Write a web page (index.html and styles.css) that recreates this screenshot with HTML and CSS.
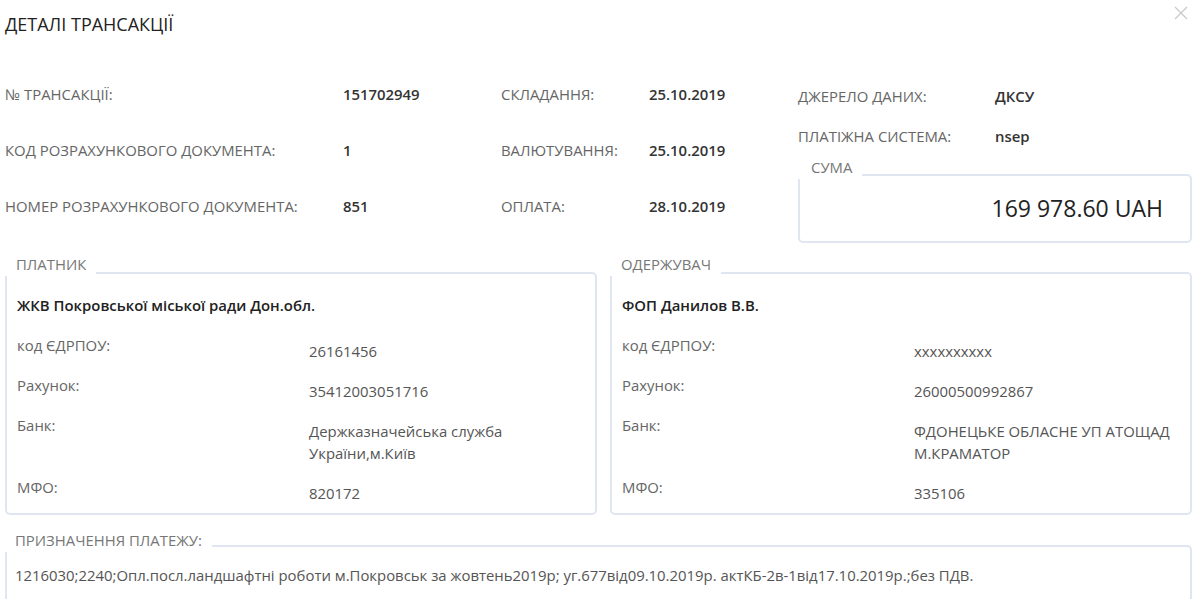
FILE: index.html
```html
<!DOCTYPE html>
<html lang="uk">
<head>
<meta charset="utf-8">
<title>Деталі трансакції</title>
<link rel="stylesheet" href="styles.css">
</head>
<body>
<div class="page">
  <header class="head">
    <h1 class="title">ДЕТАЛІ ТРАНСАКЦІЇ</h1>
    <button class="close" aria-label="Закрити">
      <svg width="14" height="14" viewBox="0 0 14 14"><path d="M1 1L13 13M13 1L1 13" stroke="#c8c8c8" stroke-width="1.2" fill="none"/></svg>
    </button>
  </header>

  <section class="summary">
    <div class="facts">
      <div class="k">№ ТРАНСАКЦІЇ:</div><div class="v">151702949</div>
      <div class="k">СКЛАДАННЯ:</div><div class="v">25.10.2019</div>
      <div class="k">КОД РОЗРАХУНКОВОГО ДОКУМЕНТА:</div><div class="v">1</div>
      <div class="k">ВАЛЮТУВАННЯ:</div><div class="v">25.10.2019</div>
      <div class="k">НОМЕР РОЗРАХУНКОВОГО ДОКУМЕНТА:</div><div class="v">851</div>
      <div class="k">ОПЛАТА:</div><div class="v">28.10.2019</div>
    </div>
    <div class="side">
      <div class="side-row"><div class="k">ДЖЕРЕЛО ДАНИХ:</div><div class="v">ДКСУ</div></div>
      <div class="side-row second"><div class="k">ПЛАТІЖНА СИСТЕМА:</div><div class="v">nsep</div></div>
      <div class="group sum-group">
        <div class="legend sum-legend">СУМА</div>
        <div class="box sum-box"><span class="amount">169 978.60 UAH</span></div>
      </div>
    </div>
  </section>

  <section class="parties">
    <div class="group party">
      <div class="legend">ПЛАТНИК</div>
      <div class="box party-box">
        <div class="name">ЖКВ Покровської міської ради Дон.обл.</div>
        <div class="rows">
          <div class="rk">код ЄДРПОУ:</div><div class="rv">26161456</div>
          <div class="rk">Рахунок:</div><div class="rv">35412003051716</div>
          <div class="rk">Банк:</div><div class="rv">Держказначейська служба України,м.Київ</div>
          <div class="rk">МФО:</div><div class="rv">820172</div>
        </div>
      </div>
    </div>
    <div class="group party">
      <div class="legend">ОДЕРЖУВАЧ</div>
      <div class="box party-box">
        <div class="name">ФОП Данилов В.В.</div>
        <div class="rows">
          <div class="rk">код ЄДРПОУ:</div><div class="rv">xxxxxxxxxx</div>
          <div class="rk">Рахунок:</div><div class="rv">26000500992867</div>
          <div class="rk">Банк:</div><div class="rv">ФДОНЕЦЬКЕ ОБЛАСНЕ УП АТОЩАД М.КРАМАТОР</div>
          <div class="rk">МФО:</div><div class="rv">335106</div>
        </div>
      </div>
    </div>
  </section>

  <section class="group purpose">
    <div class="legend">ПРИЗНАЧЕННЯ ПЛАТЕЖУ:</div>
    <div class="box purpose-box">1216030;2240;Опл.посл.ландшафтні роботи м.Покровськ за жовтень2019р; уг.677від09.10.2019р. актКБ-2в-1від17.10.2019р.;без ПДВ.</div>
  </section>
</div>
</body>
</html>
```

FILE: styles.css
```css
html, body {
  margin: 0;
  padding: 0;
  background: #fff;
  overflow: hidden;
}

body {
  font-family: "Open Sans", "Noto Sans", sans-serif;
  font-size: 14.9px;
  color: #333;
}

.page {
  padding: 12px 8px 0 5px;
}

.head {
  display: flex;
  justify-content: space-between;
  align-items: flex-start;
}

.title {
  margin: 0;
  font-size: 18px;
  line-height: 24px;
  font-weight: 400;
  color: #222;
}

.close {
  border: 0;
  background: none;
  padding: 0;
  margin: -6px 4px 0 0;
  width: 14px;
  height: 14px;
  cursor: pointer;
}

.close svg {
  display: block;
}

.summary {
  display: flex;
  margin-top: 30px;
}

.facts {
  display: grid;
  grid-template-columns: 338px 158px 148px 149px;
  grid-auto-rows: 56px;
  align-items: center;
}

.k {
  color: #666;
  line-height: 18px;
}

.v {
  color: #333;
  font-weight: 600;
  line-height: 18px;
}

.side {
  flex: 1;
  display: flex;
  flex-direction: column;
  padding-top: 21px;
}

.side-row {
  display: grid;
  grid-template-columns: 197px 1fr;
}

.side-row.second {
  margin-top: 22px;
}

.group {
  display: flex;
  flex-direction: column;
}

.legend {
  align-self: flex-start;
  position: relative;
  z-index: 1;
  background: #fff;
  color: #777;
  line-height: 24px;
  padding: 0 10px 0 11px;
  margin-bottom: -4px;
}

.box {
  border: 2px solid #dfe6f2;
  border-radius: 5px;
}

.sum-group {
  margin-top: 10px;
}

.sum-legend {
  padding-left: 13px;
  margin-bottom: -5px;
}

.sum-box {
  display: flex;
  justify-content: flex-end;
  padding: 17px 27px 18px;
}

.amount {
  font-size: 23px;
  line-height: 30px;
  color: #222;
}

.parties {
  display: grid;
  grid-template-columns: 592px 1fr;
  gap: 13px;
  margin-top: 9px;
}

.party-box {
  padding: 22px 10px 9px;
}

.name {
  font-weight: 600;
  color: #222;
  line-height: 18px;
}

.rows {
  display: grid;
  grid-template-columns: 292px 1fr;
  row-gap: 14px;
  margin-top: 22px;
  align-items: start;
}

.rk {
  color: #666;
  line-height: 18px;
}

.rv {
  color: #555;
  line-height: 22px;
  padding-top: 4px;
}

.purpose {
  margin-top: 13px;
}

.purpose .legend {
  padding-left: 10px;
  margin-bottom: -7px;
}

.purpose-box {
  padding: 19px 8px 40px;
  line-height: 18px;
  color: #555;
}
```
